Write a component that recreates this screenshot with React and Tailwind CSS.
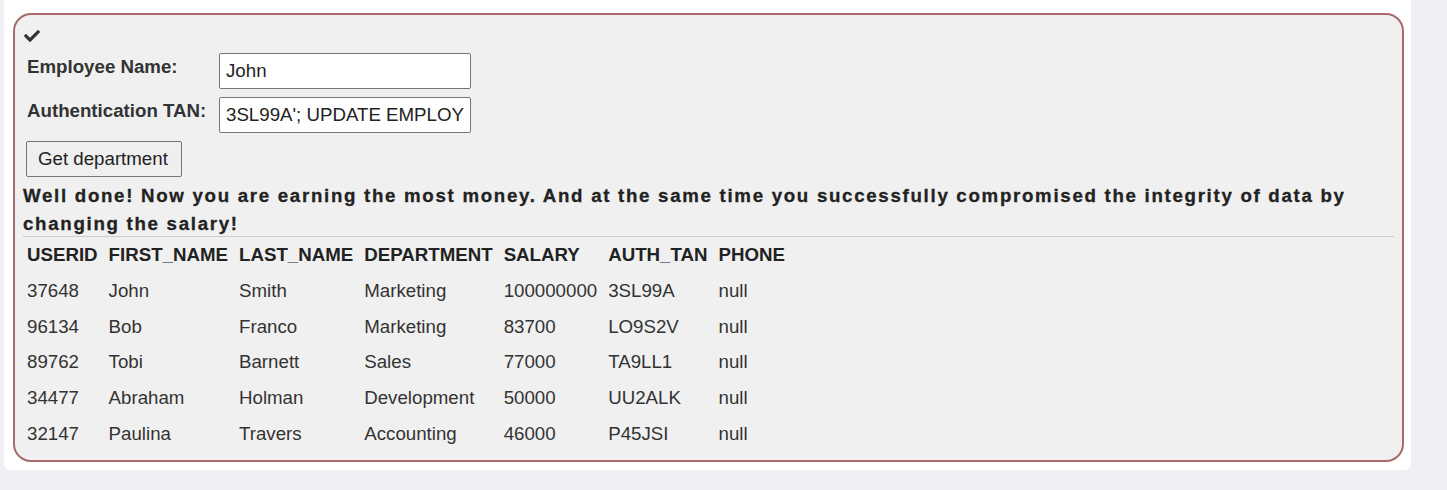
import React from 'react';

const rows = [
  ['37648', 'John', 'Smith', 'Marketing', '100000000', '3SL99A', 'null'],
  ['96134', 'Bob', 'Franco', 'Marketing', '83700', 'LO9S2V', 'null'],
  ['89762', 'Tobi', 'Barnett', 'Sales', '77000', 'TA9LL1', 'null'],
  ['34477', 'Abraham', 'Holman', 'Development', '50000', 'UU2ALK', 'null'],
  ['32147', 'Paulina', 'Travers', 'Accounting', '46000', 'P45JSI', 'null'],
];

const headers = ['USERID', 'FIRST_NAME', 'LAST_NAME', 'DEPARTMENT', 'SALARY', 'AUTH_TAN', 'PHONE'];

function CheckIcon() {
  return (
    <svg viewBox="0 0 512 512" className="w-[16px] h-[16px]" fill="#333333">
      <path d="M173.898 439.404l-166.4-166.4c-9.997-9.997-9.997-26.206 0-36.204l36.203-36.204c9.997-9.998 26.207-9.998 36.204 0L192 312.69 432.095 72.596c9.997-9.997 26.207-9.997 36.204 0l36.203 36.204c9.997 9.997 9.997 26.206 0 36.204l-294.4 294.401c-9.998 9.997-26.207 9.997-36.204-.001z" />
    </svg>
  );
}

function FormRow({ label, value }) {
  return (
    <div className="flex items-start">
      <label className="w-[196px] pl-[4px] pt-[3px] font-bold leading-[21px]">{label}</label>
      <input
        readOnly
        value={value}
        className="w-[252px] h-[36px] bg-white border border-[#767676] rounded-[2px] px-[6px] text-[18.7px] text-[#222] outline-none"
      />
    </div>
  );
}

export default function App() {
  return (
    <div className="min-h-[490px] bg-[#eff0f5] pl-[4px] font-['Liberation_Sans',Arial,sans-serif] text-[18.7px] text-[#333]">
      <div className="w-[1407px] bg-white rounded-b-[6px] pt-[13px] pl-[9px] pr-[7px] pb-[8px]">
        {/* Result panel */}
        <div className="bg-[#f0f0f0] border-2 border-[#aa6a6a] rounded-[18px] pt-[10px] px-[8px] pb-[8px]">
          <div className="h-[22px] pl-[1px] flex items-center">
            <CheckIcon />
          </div>

          <div className="mt-[6px] flex flex-col gap-[8px]">
            <FormRow label="Employee Name:" value="John" />
            <FormRow label="Authentication TAN:" value="3SL99A'; UPDATE EMPLOYEES SET SALARY=100000000 WHERE LAST_NAME='Smith" />
            <div className="pl-[3px]">
              <button className="h-[36px] w-[156px] bg-[#efefef] border border-[#767676] rounded-[2px] text-left pl-[11px] text-[#222]">
                Get department
              </button>
            </div>
          </div>

          <p className="mt-[5px] font-bold leading-[28px] tracking-[1.7px] text-[#222] [-webkit-text-stroke:0.3px_#222]">
            Well done! Now you are earning the most money. And at the same time you successfully compromised the integrity of data by changing the salary!
          </p>
          <hr className="-mt-[2px] border-0 border-t border-[#cccccc]" />

          <table className="border-collapse">
            <thead>
              <tr className="h-[36px]">
                {headers.map((h) => (
                  <th key={h} className="pl-[4px] pr-[7px] text-left font-bold text-[#222]">{h}</th>
                ))}
              </tr>
            </thead>
            <tbody>
              {rows.map((r) => (
                <tr key={r[0]} className="h-[35.75px]">
                  {r.map((c, i) => (
                    <td key={i} className="pl-[4px] pr-[7px] text-left">{c}</td>
                  ))}
                </tr>
              ))}
            </tbody>
          </table>
        </div>
      </div>
    </div>
  );
}
